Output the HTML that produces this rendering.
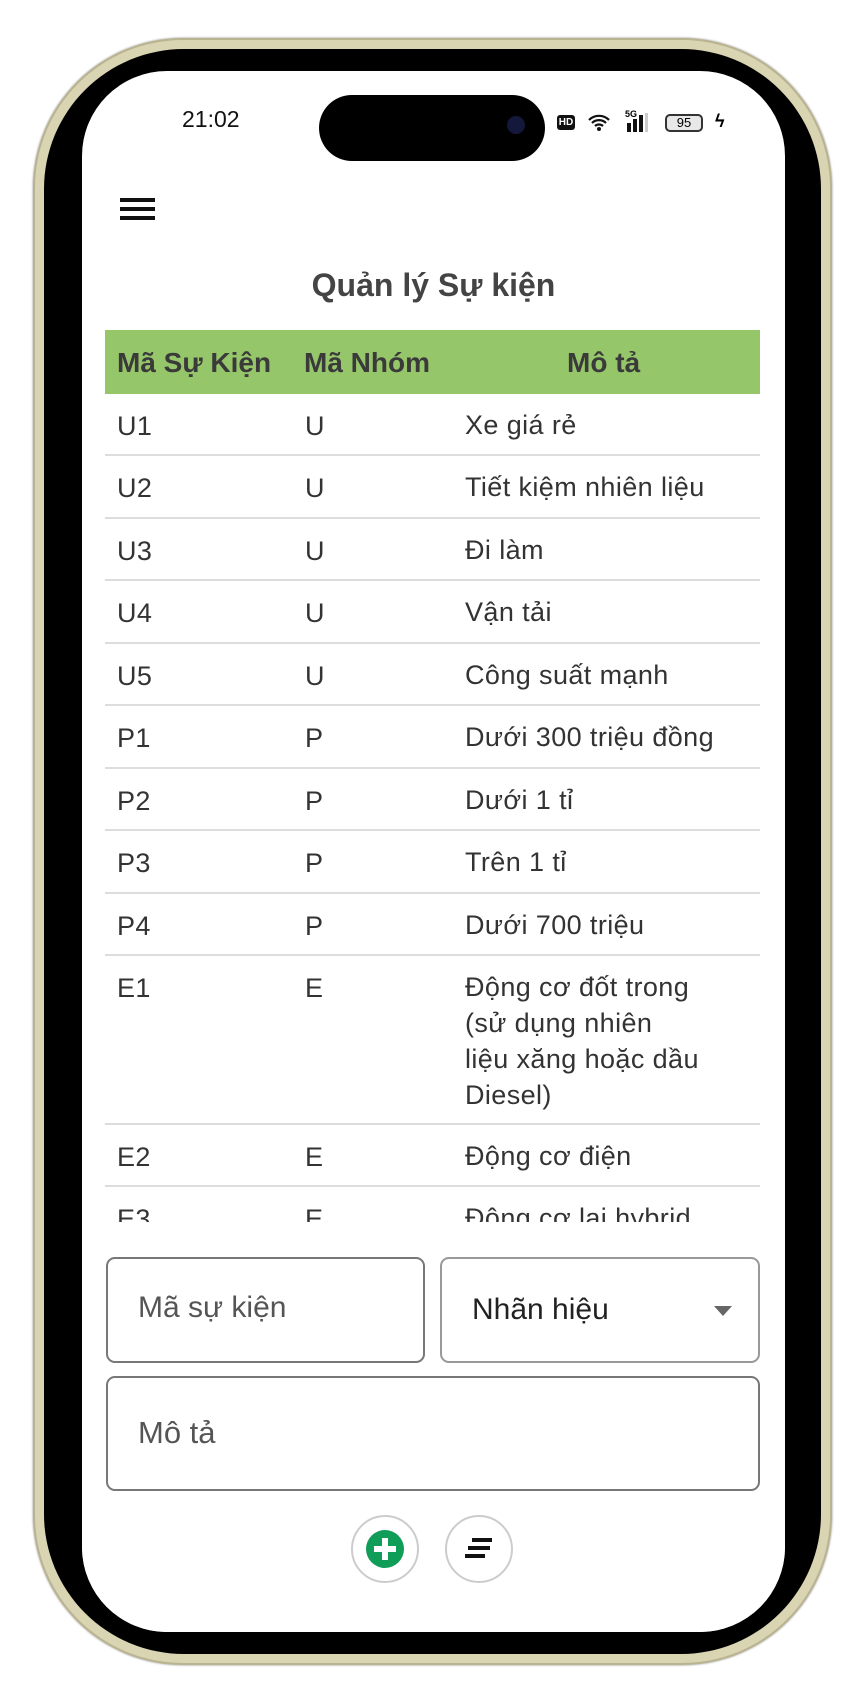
<!DOCTYPE html>
<html><head><meta charset="utf-8"><style>
*{margin:0;padding:0;box-sizing:border-box}
body{width:865px;height:1704px;background:#fff;position:relative;overflow:hidden;font-family:"Liberation Sans",sans-serif}
.abs{position:absolute}
.rim{left:33px;top:38px;width:799px;height:1627px;border-radius:150px;background:#d9d4b2;box-shadow:inset 0 0 0 2px #b9b392,0 0 2px #888}
.bez{left:44px;top:49px;width:777px;height:1605px;border-radius:140px;background:#000}
.scr{left:82px;top:71px;width:703px;height:1561px;border-radius:85px;background:#fff;overflow:hidden}
.row{position:absolute;left:23px;width:655px;border-bottom:2px solid #ddd;font-size:27px;color:#333;letter-spacing:0.4px}
.row span{position:absolute}
.c1{left:12px}.c2{left:200px}.c3{left:360px;line-height:36px}
</style></head><body>
<div class="abs rim"></div>
<div class="abs bez"></div>
<div class="abs scr">
 <div class="abs" style="left:100px;top:35px;font-size:23px;color:#111">21:02</div>
 <div class="abs" style="left:237px;top:24px;width:226px;height:66px;border-radius:33px;background:#000"></div>
 <div class="abs" style="left:425px;top:45px;width:18px;height:18px;border-radius:50%;background:#14183a"></div>
 <div class="abs" style="left:475px;top:44px;width:18px;height:15px;background:#111;border-radius:3px;color:#fff;font-size:10px;font-weight:bold;text-align:center;line-height:15px">HD</div>
 <svg class="abs" style="left:505px;top:41px" width="24" height="20" viewBox="0 0 24 20"><path d="M2 8a14 14 0 0 1 20 0M5 11a10 10 0 0 1 14 0M8 14a6 6 0 0 1 8 0" stroke="#111" stroke-width="2.2" fill="none"/><circle cx="12" cy="17" r="2" fill="#111"/></svg>
 <div class="abs" style="left:543px;top:38px;font-size:9px;font-weight:bold">5G</div>
 <div class="abs" style="left:545px;top:52px;width:4px;height:9px;background:#111"></div>
 <div class="abs" style="left:551px;top:48px;width:4px;height:13px;background:#111"></div>
 <div class="abs" style="left:557px;top:44px;width:4px;height:17px;background:#111"></div>
 <div class="abs" style="left:563px;top:42px;width:3px;height:19px;background:#ccc"></div>
 <div class="abs" style="left:583px;top:43px;width:38px;height:18px;border:2px solid #333;border-radius:5px;background:#e8e8e8;font-size:13px;text-align:center;line-height:14px">95</div>
 <div class="abs" style="left:633px;top:40px;font-size:18px;font-weight:bold">ϟ</div>
 <div class="abs" style="left:38px;top:127px;width:35px;height:4px;background:#111;box-shadow:0 9px 0 #111,0 18px 0 #111"></div>
 <div class="abs" style="left:0;top:196px;width:703px;text-align:center;font-size:32px;font-weight:bold;color:#444">Quản lý Sự kiện</div>
 <div class="abs" style="left:23px;top:259px;width:655px;height:64px;background:#96c66a;font-size:28px;font-weight:bold;color:#3a3a3a">
  <span class="abs" style="left:12px;top:17px">Mã Sự Kiện</span>
  <span class="abs" style="left:199px;top:17px">Mã Nhóm</span>
  <span class="abs" style="left:462px;top:17px">Mô tả</span>
 </div>
 <div class="row" style="top:323px;height:62px"><span class="c1" style="top:17px">U1</span><span class="c2" style="top:17px">U</span><span class="c3" style="top:13px">Xe giá rẻ</span></div>
 <div class="row" style="top:385px;height:63px"><span class="c1" style="top:17px">U2</span><span class="c2" style="top:17px">U</span><span class="c3" style="top:13px">Tiết kiệm nhiên liệu</span></div>
 <div class="row" style="top:448px;height:62px"><span class="c1" style="top:17px">U3</span><span class="c2" style="top:17px">U</span><span class="c3" style="top:13px">Đi làm</span></div>
 <div class="row" style="top:510px;height:63px"><span class="c1" style="top:17px">U4</span><span class="c2" style="top:17px">U</span><span class="c3" style="top:13px">Vận tải</span></div>
 <div class="row" style="top:573px;height:62px"><span class="c1" style="top:17px">U5</span><span class="c2" style="top:17px">U</span><span class="c3" style="top:13px">Công suất mạnh</span></div>
 <div class="row" style="top:635px;height:63px"><span class="c1" style="top:17px">P1</span><span class="c2" style="top:17px">P</span><span class="c3" style="top:13px">Dưới 300 triệu đồng</span></div>
 <div class="row" style="top:698px;height:62px"><span class="c1" style="top:17px">P2</span><span class="c2" style="top:17px">P</span><span class="c3" style="top:13px">Dưới 1 tỉ</span></div>
 <div class="row" style="top:760px;height:63px"><span class="c1" style="top:17px">P3</span><span class="c2" style="top:17px">P</span><span class="c3" style="top:13px">Trên 1 tỉ</span></div>
 <div class="row" style="top:823px;height:62px"><span class="c1" style="top:17px">P4</span><span class="c2" style="top:17px">P</span><span class="c3" style="top:13px">Dưới 700 triệu</span></div>
 <div class="row" style="top:885px;height:169px"><span class="c1" style="top:17px">E1</span><span class="c2" style="top:17px">E</span><span class="c3" style="top:13px">Động cơ đốt trong<br>(sử dụng nhiên<br>liệu xăng hoặc dầu<br>Diesel)</span></div>
 <div class="row" style="top:1054px;height:62px"><span class="c1" style="top:17px">E2</span><span class="c2" style="top:17px">E</span><span class="c3" style="top:13px">Động cơ điện</span></div>
 <div class="row" style="top:1116px;height:62px;border:none"><span class="c1" style="top:17px">E3</span><span class="c2" style="top:17px">E</span><span class="c3" style="top:13px">Động cơ lai hybrid</span></div>
 <div class="abs" style="left:0;top:1151px;width:703px;height:420px;background:#fff;border-radius:24px 24px 0 0"></div>
 <div class="abs" style="left:24px;top:1186px;width:319px;height:106px;border:2px solid #777;border-radius:9px;font-size:30px;color:#555;padding:32px 0 0 30px">Mã sự kiện</div>
 <div class="abs" style="left:358px;top:1186px;width:320px;height:106px;border:2px solid #999;border-radius:9px;font-size:30px;color:#222;padding:34px 0 0 30px">Nhãn hiệu</div>
 <div class="abs" style="left:632px;top:1235px;width:0;height:0;border-left:9px solid transparent;border-right:9px solid transparent;border-top:10px solid #666"></div>
 <div class="abs" style="left:24px;top:1305px;width:654px;height:115px;border:2px solid #777;border-radius:9px;font-size:31px;color:#555;padding:37px 0 0 30px">Mô tả</div>
 <div class="abs" style="left:269px;top:1444px;width:68px;height:68px;border:2px solid #ccc;border-radius:50%"></div>
 <div class="abs" style="left:284px;top:1459px;width:38px;height:38px;border-radius:50%;background:#0f9d58"></div>
 <div class="abs" style="left:300px;top:1467px;width:6px;height:22px;background:#fff"></div>
 <div class="abs" style="left:292px;top:1475px;width:22px;height:6px;background:#fff"></div>
 <div class="abs" style="left:363px;top:1444px;width:68px;height:68px;border:2px solid #ccc;border-radius:50%"></div>
 <svg class="abs" style="left:380px;top:1465px" width="34" height="26" viewBox="0 0 34 26"><path d="M10 4h20M6 12h22M3 20h20" stroke="#111" stroke-width="4" fill="none"/></svg>
</div>
</body></html>
